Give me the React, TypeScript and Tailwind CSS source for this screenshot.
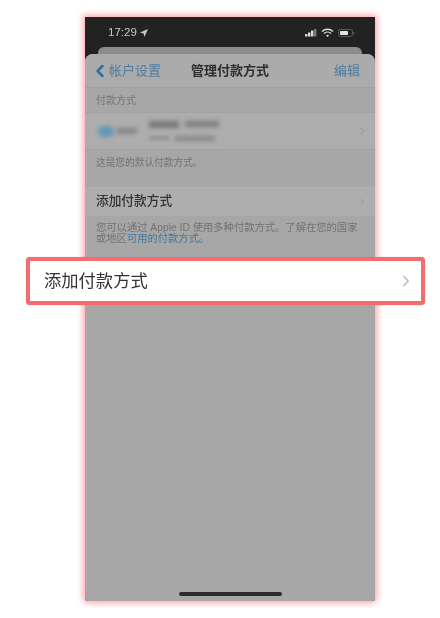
import React from 'react';
import { ChevronLeft, ChevronRight } from 'lucide-react';

const font = "font-['Liberation_Sans','Noto_Sans_CJK_SC',sans-serif]";

function StatusIcons() {
  return (
    <svg width="52" height="12" viewBox="0 0 52 12" className="shrink-0">
      <rect x="0" y="7" width="2.4" height="2.5" fill="#dcdcdc" />
      <rect x="3" y="5.5" width="2.4" height="4" fill="#dcdcdc" />
      <rect x="6" y="3.5" width="2.4" height="6" fill="#dcdcdc" />
      <rect x="9" y="2" width="2.4" height="7.5" fill="#7a7a7a" />
      <path d="M17 4.5a8 8 0 0 1 11 0M19 6.6a5 5 0 0 1 7 0" fill="none" stroke="#dcdcdc" strokeWidth="1.4" />
      <path d="M21 8.4a2.2 2.2 0 0 1 3 0L22.5 10z" fill="#dcdcdc" />
      <rect x="33.5" y="2.5" width="14" height="7" rx="1.8" fill="none" stroke="#666" strokeWidth="0.8" />
      <rect x="35" y="4" width="8" height="4" rx="0.7" fill="#e2e2e2" />
      <rect x="48.5" y="5" width="1" height="2.2" fill="#666" />
    </svg>
  );
}

export default function App() {
  return (
    <div className={`relative h-[618px] w-[440px] overflow-hidden bg-white ${font}`}>
      <div className="ml-[85px] mt-[17px] flex h-[584px] w-[290px] flex-col overflow-hidden rounded-b-[3px] bg-[#222222] shadow-[0_0_6px_2px_#ffa3a6]">
        {/* status bar */}
        <div className="flex h-[30px] shrink-0 items-center justify-between pl-[23px] pr-[18px] pt-[2px] text-[11.5px] font-medium text-[#c9c9c9] blur-[0.5px]">
          <span className="flex items-center gap-[3px]">
            17:29
            <svg width="8" height="8" viewBox="0 0 8 8"><path d="M8 0 0 3.6l3.6.8L4.4 8z" fill="#c9c9c9" /></svg>
          </span>
          <StatusIcons />
        </div>
        <div className="mx-[13px] h-[7px] shrink-0 rounded-t-[6px] bg-[#8c8c8c]" />

        {/* sheet */}
        <div className="flex flex-1 flex-col overflow-hidden rounded-t-[8px] bg-[#a7a7a7]">
          <div className="flex h-[34px] shrink-0 items-center justify-between border-b border-[#a0a0a0] bg-[#ababab] pl-[5px] pr-[15px] blur-[0.6px]">
            <div className="flex w-[101px] items-center text-[13px] text-[#4f7b9c]">
              <ChevronLeft size={20} strokeWidth={3} className="-mr-[1px] shrink-0 text-[#2f6fa3]" />
              <span className="whitespace-nowrap">帐户设置</span>
            </div>
            <span className="mr-auto text-[13px] font-semibold text-[#2e2e2e]">管理付款方式</span>
            <span className="text-[13px] text-[#4f7b9c]">编辑</span>
          </div>

          <div className="flex h-[24px] shrink-0 items-center px-[11px] text-[10px] text-[#757575] blur-[0.7px]">付款方式</div>

          {/* saved card, blurred in the picture */}
          <div className="flex h-[38px] shrink-0 items-center justify-between border-y border-[#a2a2a2] bg-[#adadad] pl-[13px] pr-[7px]">
            <div className="flex items-center">
              <div className="h-[11px] w-[16px] rounded-full bg-[#6598b6] blur-[2px]" />
              <div className="ml-[2px] h-[6px] w-[21px] rounded-sm bg-[#858585] blur-[2px]" />
              <div className="ml-[12px] flex flex-col gap-[8px]">
                <div className="flex gap-[6px]">
                  <div className="h-[7px] w-[30px] bg-[#7a7a7a] blur-[2px]" />
                  <div className="h-[6px] w-[34px] bg-[#808080] blur-[2px]" />
                </div>
                <div className="flex gap-[6px]">
                  <div className="h-[4px] w-[20px] bg-[#949494] blur-[1.5px]" />
                  <div className="h-[5px] w-[40px] bg-[#888888] blur-[2px]" />
                </div>
              </div>
            </div>
            <ChevronRight size={12} strokeWidth={2} className="text-[#979797] blur-[0.5px]" />
          </div>

          <div className="flex h-[37px] shrink-0 items-start px-[11px] pt-[6px] text-[9.7px] text-[#727272] blur-[0.7px]">这是您的默认付款方式。</div>

          <div className="flex h-[29px] shrink-0 items-center justify-between bg-[#aeaeae] pl-[11px] pr-[7px] blur-[0.6px]">
            <span className="text-[12.7px] font-medium text-[#333333]">添加付款方式</span>
            <ChevronRight size={12} strokeWidth={2} className="text-[#9a9a9a]" />
          </div>

          <p className="w-[285px] px-[11px] pt-[6px] text-[10.3px] leading-[11px] text-[#727272] blur-[0.7px]">
            您可以通过 Apple ID 使用多种付款方式。了解在您的国家<br />或地区<span className="text-[#41789c]">可用的付款方式。</span>
          </p>

          {/* home indicator */}
          <div className="mt-auto mb-[5px] h-[4px] w-[103px] shrink-0 self-center rounded-full bg-[#2c2c2c]" />
        </div>
      </div>

      {/* highlighted row over the phone */}
      <div className="absolute left-[26px] top-[257px] flex h-[48px] w-[399px] items-center justify-between rounded-[4px] border-4 border-[#f26d70] bg-white pb-[1px] pl-[14px] pr-[6px] shadow-[0_0_1px_#f26d70]">
        <span className="translate-y-[1px] text-[17.3px] leading-none text-[#333333] blur-[0.3px]">添加付款方式</span>
        <ChevronRight size={18} strokeWidth={1.6} className="text-[#b5b5b5]" />
      </div>
    </div>
  );
}
